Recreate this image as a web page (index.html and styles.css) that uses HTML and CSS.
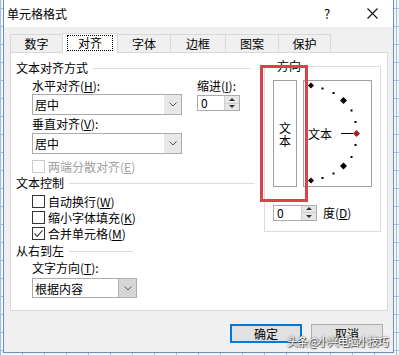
FILE: index.html
```html
<!DOCTYPE html>
<html lang="zh-CN">
<head>
  <meta charset="UTF-8" />
  <title>单元格格式</title>
  <link rel="stylesheet" href="styles.css">
</head>
<body>
  <div class="desk">
    <div class="dialog">
      <div class="titlebar">
        <span class="title">单元格格式</span>
        <span class="help">?</span>
        <span class="close">
          <svg width="11" height="11" viewBox="0 0 11 11"><path d="M0.5 0.5L10.5 10.5M10.5 0.5L0.5 10.5" stroke="#111" stroke-width="1.1" fill="none"/></svg>
        </span>
      </div>

      <div class="tabs">
        <div class="tab w52">数字</div>
        <div class="tab w55 active"><span class="focus">对齐</span></div>
        <div class="tab w53">字体</div>
        <div class="tab w55">边框</div>
        <div class="tab w53">图案</div>
        <div class="tab w52">保护</div>
      </div>

      <div class="panel">
        <div class="col-left">
          <div class="group-title gt-align">文本对齐方式</div>

          <div class="field-row">
            <div class="field-main">
              <div class="label">水平对齐(<u>H</u>):</div>
              <div class="combo">
                <span class="combo-val">居中</span>
                <span class="combo-btn"><svg width="8" height="5" viewBox="0 0 8 5"><path d="M0.5 0.5L4 4L7.5 0.5" stroke="#555" fill="none"/></svg></span>
              </div>
            </div>
            <div class="field-side">
              <div class="label">缩进(<u>I</u>):</div>
              <div class="spin">
                <span class="spin-val">0</span>
                <span class="spin-btns">
                  <span class="spin-up"></span>
                  <span class="spin-down"></span>
                </span>
              </div>
            </div>
          </div>

          <div class="field-main sub">
            <div class="label">垂直对齐(<u>V</u>):</div>
            <div class="combo">
              <span class="combo-val">居中</span>
              <span class="combo-btn"><svg width="8" height="5" viewBox="0 0 8 5"><path d="M0.5 0.5L4 4L7.5 0.5" stroke="#555" fill="none"/></svg></span>
            </div>
          </div>

          <div class="check disabled first">
            <span class="box"></span>两端分散对齐(<u>E</u>)
          </div>

          <div class="group-title gt-control">文本控制</div>
          <div class="check"><span class="box"></span>自动换行(<u>W</u>)</div>
          <div class="check"><span class="box"></span>缩小字体填充(<u>K</u>)</div>
          <div class="check">
            <span class="box"><svg width="11" height="11" viewBox="0 0 11 11"><path d="M1.5 5.5L4.2 8.3L9.5 2.3" stroke="#444" stroke-width="1.2" fill="none"/></svg></span>合并单元格(<u>M</u>)
          </div>

          <div class="group-title gt-rtl">从右到左</div>
          <div class="field-main sub narrow">
            <div class="label">文字方向(<u>T</u>):</div>
            <div class="combo short">
              <span class="combo-val">根据内容</span>
              <span class="combo-btn hot"><svg width="8" height="5" viewBox="0 0 8 5"><path d="M0.5 0.5L4 4L7.5 0.5" stroke="#555" fill="none"/></svg></span>
            </div>
          </div>
        </div>

        <fieldset class="orient">
          <legend>方向</legend>
          <div class="orient-boxes">
            <div class="vert-box">
              <span>文</span>
              <span>本</span>
            </div>
            <div class="dial-box">
              <svg width="67" height="105" viewBox="0 0 67 105">
                <g fill="#000">
                  <path d="M4 4.5L7 1.5L10 4.5L7 7.5Z"/>
                  <rect x="17.5" y="6.5" width="2" height="2"/>
                  <rect x="28.5" y="11" width="2" height="2"/>
                  <path d="M36 19.5L39.5 16L43 19.5L39.5 23Z"/>
                  <rect x="46.5" y="28.5" width="2" height="2"/>
                  <rect x="50.5" y="40" width="2" height="2"/>
                  <rect x="50.5" y="63" width="2" height="2"/>
                  <rect x="46.5" y="75" width="2" height="2"/>
                  <path d="M36 85L39.5 81.5L43 85L39.5 88.5Z"/>
                  <rect x="28.5" y="91.5" width="2" height="2"/>
                  <rect x="17.5" y="96" width="2" height="2"/>
                  <path d="M4 99.5L7 96.5L10 99.5L7 102.5Z"/>
                </g>
                <text x="4" y="57.5" font-size="12" font-family="Noto Sans CJK SC, sans-serif" fill="#000">文本</text>
                <line x1="37" y1="52.5" x2="49" y2="52.5" stroke="#000" stroke-width="1"/>
                <path d="M49 52.5L52.5 49L56 52.5L52.5 56Z" fill="#a3231f"/>
              </svg>
            </div>
          </div>
          <div class="degree-row">
            <div class="spin">
              <span class="spin-val">0</span>
              <span class="spin-btns">
                <span class="spin-up"></span>
                <span class="spin-down"></span>
              </span>
            </div>
            <span class="degree-label">度(<u>D</u>)</span>
          </div>
        </fieldset>
      </div>

      <div class="buttons">
        <div class="btn default">确定</div>
        <div class="btn">取消</div>
      </div>
    </div>

    <div class="mark-box"></div>
    <div class="watermark">头条 @小兴电脑小技巧</div>
  </div>
</body>
</html>
```

FILE: styles.css
```css
body {
  margin: 0;
  font-family: "Noto Sans CJK SC", "Noto Sans", sans-serif;
  font-size: 12px;
  color: #000;
  background-color: #f2f6fb;
  background-image:
    linear-gradient(#9fbde2 1px, transparent 1px),
    linear-gradient(90deg, #9fbde2 1px, transparent 1px);
  background-size: 22px 18px;
  background-position: 0 8px;
}
u {
  text-decoration: underline;
  text-underline-offset: 1px;
}
.desk {
  position: relative;
  width: 399px;
  height: 355px;
  overflow: hidden;
}
.dialog {
  margin-left: 3px;
  width: 391px;
  height: 353px;
  box-sizing: border-box;
  border: 1px solid #6f8fb6;
  border-top: none;
  background: #f0f0f0;
}

/* title bar */
.titlebar {
  height: 27px;
  background: #fff;
  display: flex;
  align-items: center;
  padding-left: 3px;
  padding-right: 11px;
}
.title {
  flex: 1;
}
.help {
  width: 20px;
  text-align: center;
  font-size: 13px;
  margin-right: 25px;
}
.close {
  width: 20px;
  height: 11px;
  display: flex;
  justify-content: center;
}

/* tabs */
.tabs {
  position: relative;
  z-index: 1;
  display: flex;
  align-items: flex-end;
  height: 19px;
  margin: 6px 0 0 6px;
}
.tab {
  box-sizing: border-box;
  height: 18px;
  line-height: 17px;
  border: 1px solid #d9d9d9;
  border-bottom: none;
  margin-right: -1px;
  text-align: center;
  background: #f0f0f0;
}
.tab.active {
  height: 21px;
  margin-bottom: -2px;
  background: #fff;
  line-height: 18px;
}
.w52 { width: 53px; }
.w53 { width: 54px; }
.w55 { width: 56px; }
.focus {
  display: inline-block;
  border: 1px dotted #000;
  padding: 0 10px;
  line-height: 14px;
}

/* panel */
.panel {
  position: relative;
  display: flex;
  box-sizing: border-box;
  width: 378px;
  height: 259px;
  margin-left: 6px;
  border: 1px solid #d9d9d9;
  background: #fff;
}
.col-left {
  width: 253px;
  padding-left: 5px;
  box-sizing: border-box;
}
.group-title {
  display: flex;
  align-items: center;
  height: 16px;
  line-height: 16px;
}
.group-title::after {
  content: "";
  flex: 1;
  height: 1px;
  background: #dcdcdc;
  margin-left: 5px;
}
.gt-align { width: 234px; margin-top: 7px; }
.gt-control { width: 239px; margin-top: 1px; }
.gt-rtl { width: 117px; margin-top: 2px; }

.field-row {
  display: flex;
  gap: 15px;
  margin: 2px 0 0 16px;
}
.field-main {
  width: 150px;
}
.field-main.sub {
  margin: 1px 0 0 16px;
}
.field-main.narrow {
  width: 105px;
}
.label {
  height: 16px;
  line-height: 16px;
}
.sub .label {
  margin-bottom: 1px;
}
.narrow .label {
  margin-bottom: 2px;
}
.combo {
  display: flex;
  box-sizing: border-box;
  height: 21px;
  border: 1px solid #acacac;
}
.combo.short {
  height: 20px;
}
.combo-val {
  flex: 1;
  padding-left: 2px;
  line-height: 19px;
}
.combo-btn {
  width: 17px;
  display: flex;
  align-items: center;
  justify-content: center;
  background: #e8e8e8;
}
.combo-btn.hot {
  background: #d6d6d6;
  border-left: 1px solid #b4b4b4;
}

.field-side {
  width: 43px;
}
.spin {
  display: flex;
  box-sizing: border-box;
  width: 43px;
  height: 16px;
  margin-top: 1px;
  border: 1px solid #acacac;
}
.spin-val {
  flex: 1;
  padding-left: 3px;
  line-height: 14px;
}
.spin-btns {
  width: 14px;
  display: flex;
  flex-direction: column;
  background: #e6e6e6;
  border-left: 1px solid #cfcfcf;
}
.spin-up,
.spin-down {
  flex: 1;
  display: flex;
  align-items: center;
  justify-content: center;
}
.spin-up { border-bottom: 1px solid #cfcfcf; }
.spin-up::before {
  content: "";
  border: 3px solid transparent;
  border-bottom: 3px solid #333;
  border-top: none;
}
.spin-down::before {
  content: "";
  border: 3px solid transparent;
  border-top: 3px solid #333;
  border-bottom: none;
}

.check {
  display: flex;
  align-items: center;
  height: 16px;
  margin-left: 16px;
}
.check.first {
  margin-top: 4px;
}
.group-title + .check {
  margin-top: 2px;
}
.box {
  box-sizing: border-box;
  width: 13px;
  height: 13px;
  border: 1px solid #333;
  margin-right: 3px;
  display: flex;
  align-items: center;
  justify-content: center;
}
.check.disabled {
  color: #a0a0a0;
}
.check.disabled .box {
  border-color: #cccccc;
}

/* orientation group */
.orient {
  box-sizing: border-box;
  width: 117px;
  height: 172px;
  margin: 7px 0 0 0;
  padding: 0 0 0 8px;
  border: 1px solid #dcdcdc;
  min-width: 0;
}
.orient legend {
  margin-left: 3px;
  padding: 0 1px;
  line-height: 12px;
}
.orient-boxes {
  display: flex;
  gap: 6px;
  margin-top: 8px;
}
.vert-box {
  box-sizing: border-box;
  width: 24px;
  height: 107px;
  border: 1px solid #a0a0a0;
  display: flex;
  flex-direction: column;
  align-items: center;
  justify-content: center;
  line-height: 13px;
}
.dial-box {
  box-sizing: border-box;
  width: 69px;
  height: 107px;
  border: 1px solid #a0a0a0;
}
.dial-box svg {
  display: block;
}
.degree-row {
  display: flex;
  align-items: center;
  gap: 6px;
  margin-top: 17px;
}
.degree-row .spin {
  width: 44px;
  margin-top: 0;
}

/* buttons */
.buttons {
  display: flex;
  justify-content: flex-end;
  gap: 9px;
  margin-top: 13px;
  padding-right: 10px;
}
.btn {
  box-sizing: border-box;
  width: 72px;
  height: 19px;
  line-height: 17px;
  text-align: center;
  border: 1px solid #adadad;
  background: #e1e1e1;
}
.btn.default {
  border-color: #0078d7;
  box-shadow: inset 0 0 0 1px #0078d7;
}

/* overlays */
.mark-box {
  position: absolute;
  left: 260px;
  top: 65px;
  width: 48px;
  height: 137px;
  box-sizing: border-box;
  border: 3px solid #d8434a;
}
.watermark {
  position: absolute;
  left: 287px;
  top: 334px;
  color: #fff;
  font-size: 11px;
  letter-spacing: -1px;
  line-height: 14px;
  white-space: nowrap;
  text-shadow: 0 0 2px #333, 1px 1px 1px #444;
}
```
